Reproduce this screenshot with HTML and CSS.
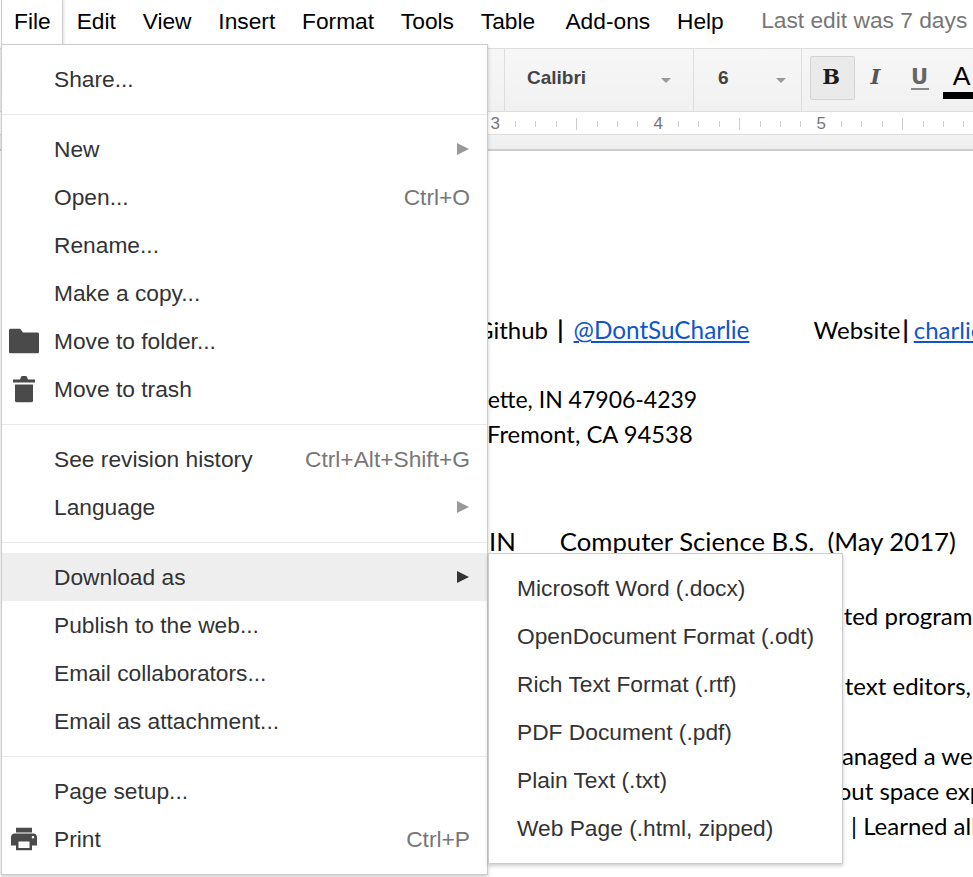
FILE: index.html
```html
<!DOCTYPE html>
<html lang="en">
<head>
<meta charset="utf-8">
<title>Google Docs File menu</title>
<link rel="stylesheet" href="styles.css">
</head>
<body>
<div class="app">
  <nav class="menubar">
    <span class="mb-item mb-active">File</span>
    <span class="mb-item">Edit</span>
    <span class="mb-item">View</span>
    <span class="mb-item">Insert</span>
    <span class="mb-item">Format</span>
    <span class="mb-item">Tools</span>
    <span class="mb-item mb-table">Table</span>
    <span class="mb-item">Add-ons</span>
    <span class="mb-item">Help</span>
    <span class="last-edit">Last edit was 7 days</span>
  </nav>
  <div class="toolbar">
    <div class="tb-spacer"></div>
    <div class="tb-select tb-font"><span>Calibri</span><i class="caret"></i></div>
    <div class="tb-select tb-size"><span>6</span><i class="caret"></i></div>
    <div class="tb-format">
      <span class="tb-btn tb-on tb-b">B</span>
      <span class="tb-btn tb-i">I</span>
      <span class="tb-btn tb-u"><span class="u-glyph">U</span></span>
      <span class="tb-color">A</span>
    </div>
  </div>
  <div class="ruler">
    <div class="slot num">3</div><div class="slot"><i></i></div><div class="slot"><i></i></div><div class="slot"><i></i></div><div class="slot"><i class="tall"></i></div><div class="slot"><i></i></div><div class="slot"><i></i></div><div class="slot"><i></i></div>
    <div class="slot num">4</div><div class="slot"><i></i></div><div class="slot"><i></i></div><div class="slot"><i></i></div><div class="slot"><i class="tall"></i></div><div class="slot"><i></i></div><div class="slot"><i></i></div><div class="slot"><i></i></div>
    <div class="slot num">5</div><div class="slot"><i></i></div><div class="slot"><i></i></div><div class="slot"><i></i></div><div class="slot"><i class="tall"></i></div><div class="slot"><i></i></div><div class="slot"><i></i></div><div class="slot"><i></i></div>
  </div>
  <div class="doc-gap"></div>
  <main class="doc">
    <p class="line github">Github <b class="pipe">|</b> <a href="#">@DontSuCharlie</a><span class="website">Website</span><b class="pipe2">|</b><a href="#">charlie</a></p>
    <p class="line blank"></p>
    <p class="line addr1">Lafayette, IN 47906-4239</p>
    <p class="line addr2">Fremont, CA 94538</p>
    <p class="line blank"></p>
    <p class="line blank"></p>
    <p class="line school">IN<span class="degree">Computer Science B.S.&nbsp; (May 2017)</span></p>
    <p class="line blank"></p>
    <p class="line l-prog">Created program</p>
    <p class="line blank"></p>
    <p class="line l-text">Used text editors,</p>
    <p class="line blank"></p>
    <p class="line l-man">Managed a website</p>
    <p class="line l-out">About space exploration</p>
    <p class="line l-learn">| Learned all</p>
  </main>
</div>

<div class="menu file-menu">
  <div class="mi"><span class="mi-label">Share...</span></div>
  <div class="sep"></div>
  <div class="mi"><span class="mi-label">New</span><i class="arrow"></i></div>
  <div class="mi"><span class="mi-label">Open...</span><span class="key">Ctrl+O</span></div>
  <div class="mi"><span class="mi-label">Rename...</span></div>
  <div class="mi"><span class="mi-label">Make a copy...</span></div>
  <div class="mi">
    <svg class="ico ico-folder" width="30" height="25" viewBox="0 0 30 25"><path d="M0 2C0 1 .6 0 1.500 0H11l3 4h14.500c.8 0 1.500 .7 1.500 1.500V23.500c0 .8-.7 1.500-1.500 1.500H1.500C.7 25 0 24.300 0 23.500z" fill="#4a4a4a"/></svg>
    <span class="mi-label">Move to folder...</span>
  </div>
  <div class="mi">
    <svg class="ico ico-trash" width="22" height="27" viewBox="0 0 22 27"><path d="M0 4h7l1-2.500C8.300 .8 8.800 .5 9.500 .5h3c.7 0 1.200 .3 1.500 1L15 4h7v3H0zM2 9h18v16c0 1.100-.9 2-2 2H4c-1.100 0-2-.9-2-2z" fill="#4a4a4a"/></svg>
    <span class="mi-label">Move to trash</span>
  </div>
  <div class="sep"></div>
  <div class="mi"><span class="mi-label">See revision history</span><span class="key">Ctrl+Alt+Shift+G</span></div>
  <div class="mi"><span class="mi-label">Language</span><i class="arrow"></i></div>
  <div class="sep"></div>
  <div class="mi mi-on"><span class="mi-label">Download as</span><i class="arrow arrow-on"></i></div>
  <div class="mi"><span class="mi-label">Publish to the web...</span></div>
  <div class="mi"><span class="mi-label">Email collaborators...</span></div>
  <div class="mi"><span class="mi-label">Email as attachment...</span></div>
  <div class="sep"></div>
  <div class="mi"><span class="mi-label">Page setup...</span></div>
  <div class="mi">
    <svg class="ico ico-print" width="26" height="23" viewBox="0 0 26 23"><path d="M5 0h16v5H5zM3.500 6h19C24.400 6 26 7.600 26 9.500V18h-5v5H5v-5H0V9.500C0 7.600 1.600 6 3.500 6zM7.500 14v6.500h11V14zM22 8.500a1.300 1.300 0 1 0 0 2.600 1.300 1.300 0 0 0 0-2.600z" fill="#4a4a4a" fill-rule="evenodd"/></svg>
    <span class="mi-label">Print</span><span class="key">Ctrl+P</span>
  </div>
</div>

<div class="menu sub-menu">
  <div class="si">Microsoft Word (.docx)</div>
  <div class="si">OpenDocument Format (.odt)</div>
  <div class="si">Rich Text Format (.rtf)</div>
  <div class="si">PDF Document (.pdf)</div>
  <div class="si">Plain Text (.txt)</div>
  <div class="si">Web Page (.html, zipped)</div>
</div>
</body>
</html>
```
FILE: styles.css
```css
* { box-sizing: border-box; }
html, body { margin: 0; padding: 0; height: 100%; overflow: hidden; background: #fff; }
body { font-family: "Liberation Sans", Arial, sans-serif; position: relative; }
.app { display: flex; flex-direction: column; height: 877px; overflow: hidden; }

/* menu bar */
.menubar { display: flex; align-items: flex-start; height: 48px; padding: 0 0 0 1px; font-size: 22.75px; color: #000; white-space: nowrap; overflow: hidden; flex: none; }
.mb-item { padding: 0 13.4px; line-height: 42px; }
.mb-active { margin-right: 0.6px; height: 44px; border-left: 1px solid #ccc; border-right: 1px solid #ccc; box-shadow: 1px 0 3px rgba(0,0,0,.12); padding: 0 11px 0 12px; }
.mb-table { margin-right: 3.5px; }
.last-edit { margin-left: 24px; color: #777; line-height: 41px; }

/* toolbar */
.toolbar { display: flex; height: 64px; flex: none; border-top: 1px solid #ddd; border-bottom: 1px solid #ddd; background: linear-gradient(#f7f7f7, #f1f1f1); }
.tb-spacer { width: 505px; border-right: 1px solid #ddd; flex: none; }
.tb-select { display: flex; align-items: center; justify-content: space-between; border-right: 1px solid #ddd; font-weight: 700; font-size: 19px; color: #444; flex: none; padding-bottom: 4px; }
.tb-font { width: 189px; padding-left: 22px; padding-right: 22px; }
.tb-size { width: 108px; padding-left: 24px; padding-right: 15px; }
.caret { width: 0; height: 0; margin-top: 5px; border-left: 5px solid transparent; border-right: 5px solid transparent; border-top: 5px solid #999; }
.tb-format { display: flex; align-items: center; padding-left: 8px; padding-bottom: 4px; flex: 1; min-width: 0; overflow: hidden; }
.tb-btn { display: flex; align-items: center; justify-content: center; width: 45px; height: 44px; padding-bottom: 3px; font-family: "DejaVu Serif", serif; font-size: 21px; font-weight: 700; color: #555; border: 1px solid transparent; border-radius: 2px; flex: none; }
.tb-on { background: #eaeaea; border-color: #d4d4d4; color: #222; }
.tb-b { color: #1c1c1c; padding-right: 3px; }
.tb-i { font-style: italic; margin-left: -2px; }
.tb-u { margin-left: -1px; padding-bottom: 0; font-family: "DejaVu Sans", sans-serif; }
.u-glyph { display: block; line-height: 20px; height: 23px; width: 18px; text-align: center; font-size: 21px; color: #666; border-bottom: 2px solid #888; }
.tb-color { flex: none; width: 31px; margin-left: 1px; padding-left: 6px; height: 42px; text-align: center; font-size: 26.500px; line-height: 38px; color: #000; border-bottom: 7px solid #000; }

/* ruler */
.ruler { display: flex; align-items: center; height: 23px; flex: none; padding-left: 485px; background: #fff; border-bottom: 1px solid #ddd; }
.slot { width: 20.375px; flex: none; display: flex; justify-content: center; align-items: center; height: 100%; }
.slot i { display: block; width: 1px; height: 6px; background: #ccc; margin-top: 1px; }
.slot i.tall { height: 12px; }
.num { font-size: 17px; color: #777; padding-top: 1px; }

.doc-gap { height: 16px; flex: none; background: linear-gradient(#f3f3f3, #eee); border-bottom: 2px solid #ccc; }

/* document */
.doc { flex: 1; min-height: 0; padding-top: 161px; font-family: Lato, "Open Sans", sans-serif; font-size: 24px; color: #000; white-space: nowrap; overflow: hidden; }
.line { margin: 0; height: 35px; line-height: 35px; }
.line a { color: #1155cc; text-decoration: underline; }
.pipe { margin: 0 4px 0 3px; }
.pipe2 { margin: 0 5px 0 2px; }
.github a:first-of-type { font-size: 24.3px; }
.website { margin-left: 64px; }
.github { margin-left: 476px; }
.addr1 { margin-left: 434px; font-size: 23px; }
.addr2 { margin-left: 487px; font-size: 23.800px; }
.school { margin-left: 489px; height: 41px; line-height: 38px; font-size: 25.700px; }
.degree { margin-left: 44px; }
.l-prog { margin-left: 795px; }
.l-text { margin-left: 785px; }
.l-man { margin-left: 820px; }
.l-out { margin-left: 808px; }
.l-learn { margin-left: 851px; }

/* menus */
.menu { position: absolute; background: #fff; border: 1px solid #ccc; box-shadow: 0 2px 4px rgba(0,0,0,.2); padding: 10px 0; color: #333; font-size: 22.75px; }
.file-menu { left: 1px; top: 44px; width: 487px; height: 831px; }
.sub-menu { left: 488px; top: 553px; width: 355px; height: 311px; }
.mi { position: relative; display: flex; align-items: center; justify-content: space-between; height: 48px; padding: 0 17px 0 52px; white-space: nowrap; }
.mi-on { background: #eee; }
.ico { position: absolute; top: 50%; transform: translateY(-50%); }
.ico-folder { left: 7px; }
.ico-trash { left: 11px; }
.ico-print { left: 9px; }
.key { color: #777; }
.arrow { width: 0; height: 0; margin-right: 1px; border-top: 6px solid transparent; border-bottom: 6px solid transparent; border-left: 12px solid #999; }
.arrow-on { border-left-color: #333; }
.sep { height: 1px; background: #e8e8e8; margin: 11px 0 10px; }
.si { height: 48px; line-height: 48px; padding-left: 28px; white-space: nowrap; }
```
